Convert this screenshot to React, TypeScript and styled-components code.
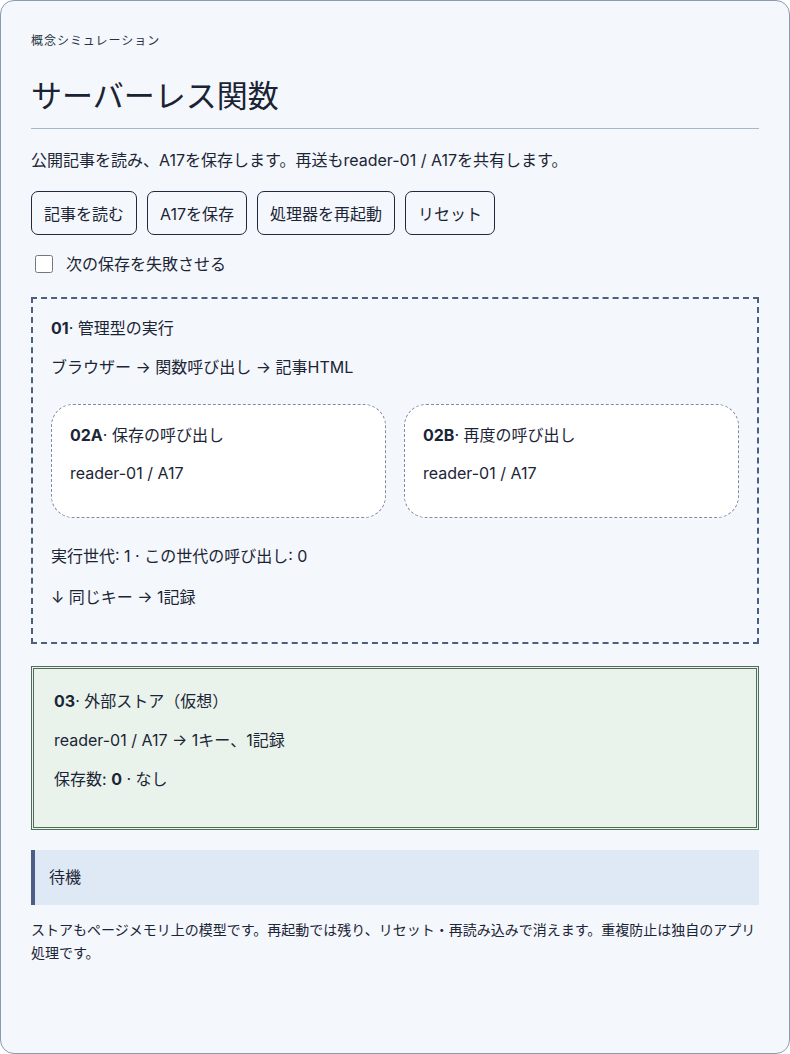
import React, { useState } from "react";
import styled, { createGlobalStyle } from "styled-components";

const GlobalStyle = createGlobalStyle`
  html, body {
    margin: 0;
    padding: 0;
    background: #ffffff;
  }
  body {
    font-family: Inter, "Noto Sans CJK JP", sans-serif;
    color: #1b2536;
    -webkit-font-smoothing: antialiased;
  }
  *, *::before, *::after {
    box-sizing: border-box;
  }
`;

const Shell = styled.main`
  min-height: 100vh;
  padding: 30px;
  border: 1px solid #8c9ab0;
  border-radius: 14px;
  background: #f4f7fb;
`;

const Eyebrow = styled.p`
  margin: 0;
  font-size: 12px;
  line-height: 20px;
  letter-spacing: 0.08em;
  color: #283244;
`;

const Title = styled.h1`
  margin: 25px 0 0;
  padding-bottom: 12px;
  border-bottom: 1px solid #a8b6ca;
  font-size: 31px;
  line-height: 40px;
  font-weight: 400;
  color: #1a2334;
`;

const Lead = styled.p`
  margin: 19px 0 0;
  font-size: 16px;
  line-height: 24px;
`;

const Toolbar = styled.div`
  display: flex;
  flex-wrap: wrap;
  gap: 10px;
  margin-top: 19px;
`;

const Button = styled.button`
  height: 44px;
  padding: 0 12px;
  border: 1px solid #1f2a3c;
  border-radius: 7px;
  background: transparent;
  font-family: inherit;
  font-size: 16px;
  font-weight: 400;
  color: #1b2536;
  cursor: pointer;
`;

const Toggle = styled.label`
  display: flex;
  align-items: center;
  gap: 10px;
  margin-top: 17px;
  font-size: 16px;
  line-height: 24px;
`;

const Check = styled.input`
  width: 18px;
  height: 18px;
  margin: 3px 3px 3px 4px;
`;

const Runtime = styled.section`
  margin-top: 21px;
  padding: 17px 18px 19px;
  border: 2px dashed #4b5f82;
`;

const Line = styled.p<{ $after?: number }>`
  margin: 0 0 ${(p) => p.$after ?? 15}px;
  font-size: 16px;
  line-height: 24px;
`;

const Num = styled.strong`
  font-weight: 700;
`;

const CallGrid = styled.div`
  display: grid;
  grid-template-columns: 1fr 1fr;
  gap: 18px;
  margin: 25px 0 26px;
`;

const CallCard = styled.article`
  padding: 18px;
  border: 1px dashed #7d8ca6;
  border-radius: 22px;
  background: #ffffff;
`;

const CardLine = styled.p`
  margin: 0 0 14px;
  font-size: 16px;
  line-height: 24px;
`;

const Store = styled.section`
  margin-top: 22px;
  padding: 20px 20px 21px;
  border: 3px double #4f6e57;
  background: #e9f3eb;
`;

const Status = styled.div`
  margin-top: 20px;
  padding: 15px 14px 16px;
  border-left: 4px solid #4a5e86;
  background: #dfe9f5;
  font-size: 16px;
  line-height: 24px;
`;

const Note = styled.p`
  margin: 13px 0 0;
  font-size: 14px;
  line-height: 23px;
`;

export default function App() {
  const [failNext, setFailNext] = useState(false);

  return (
    <>
      <GlobalStyle />
      <Shell>
        <Eyebrow>概念シミュレーション</Eyebrow>
        <Title>サーバーレス関数</Title>
        <Lead>公開記事を読み、A17を保存します。再送もreader-01 / A17を共有します。</Lead>

        <Toolbar>
          <Button type="button">記事を読む</Button>
          <Button type="button">A17を保存</Button>
          <Button type="button">処理器を再起動</Button>
          <Button type="button">リセット</Button>
        </Toolbar>

        <Toggle>
          <Check
            type="checkbox"
            checked={failNext}
            onChange={(e) => setFailNext(e.target.checked)}
          />
          次の保存を失敗させる
        </Toggle>

        <Runtime>
          <Line>
            <Num>01</Num>· 管理型の実行
          </Line>
          <Line>ブラウザー → 関数呼び出し → 記事HTML</Line>
          <CallGrid>
            <CallCard>
              <CardLine>
                <Num>02A</Num>· 保存の呼び出し
              </CardLine>
              <CardLine>reader-01 / A17</CardLine>
            </CallCard>
            <CallCard>
              <CardLine>
                <Num>02B</Num>· 再度の呼び出し
              </CardLine>
              <CardLine>reader-01 / A17</CardLine>
            </CallCard>
          </CallGrid>
          <Line $after={17}>実行世代: 1 · この世代の呼び出し: 0</Line>
          <Line $after={14}>↓ 同じキー → 1記録</Line>
        </Runtime>

        <Store>
          <Line>
            <Num>03</Num>· 外部ストア（仮想）
          </Line>
          <Line>reader-01 / A17 → 1キー、1記録</Line>
          <Line>
            保存数: <Num>0</Num> · なし
          </Line>
        </Store>

        <Status>待機</Status>

        <Note>
          ストアもページメモリ上の模型です。再起動では残り、リセット・再読み込みで消えます。重複防止は独自のアプリ処理です。
        </Note>
      </Shell>
    </>
  );
}
